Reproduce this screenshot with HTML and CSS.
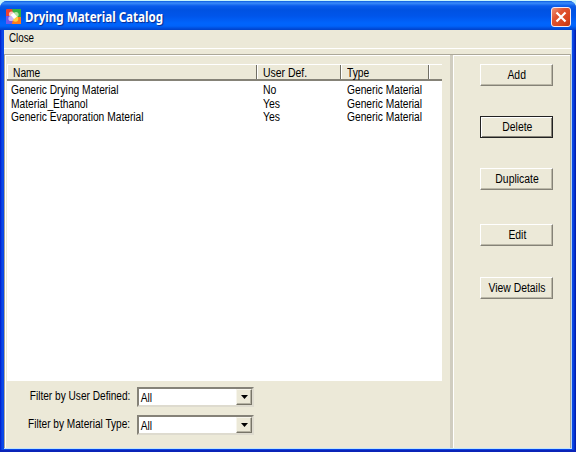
FILE: index.html
```html
<!DOCTYPE html>
<html lang="en">
<head>
<meta charset="utf-8">
<title>Drying Material Catalog</title>
<link rel="stylesheet" href="styles.css">
</head>
<body>
<div class="window">
  <header class="titlebar">
    <svg class="app-icon" width="15" height="15" viewBox="0 0 15 15">
      <rect width="15" height="15" rx="1" fill="#f04030"/>
      <path d="M6 0h9v9H8z" fill="#35b040"/>
      <path d="M0 7h7v8H0z" fill="#6f58ea"/>
      <path d="M7 8h8v7H6z" fill="#ff7a1c"/>
      <circle cx="5.5" cy="5" r="2.6" fill="#f9c5c0"/>
      <circle cx="10" cy="5.5" r="2.6" fill="#b5e4a5"/>
      <circle cx="9.5" cy="10" r="2.8" fill="#ffd040"/>
      <circle cx="5" cy="9.5" r="2.6" fill="#c9b4fa"/>
      <path d="M4.5 6l3-2.2L11 7.6 8 10z" fill="#fff"/>
    </svg>
    <h1 class="title">Drying Material Catalog</h1>
    <button class="close" aria-label="Close window">
      <svg width="12" height="12" viewBox="0 0 12 12"><path d="M1.5 1.5l9 9M10.5 1.5l-9 9" stroke="#fff" stroke-width="2.2"/></svg>
    </button>
  </header>
  <div class="client">
    <nav class="menu"><span class="text close-item">Close</span></nav>
    <main class="content">
      <section class="catalog">
        <div class="list">
          <div class="row head"><div class="cell name"><span class="text">Name</span></div><div class="cell user"><span class="text">User Def.</span></div><div class="cell type"><span class="text">Type</span></div><div class="cell rest"></div></div>
          <div class="row"><div class="cell name"><span class="text">Generic Drying Material</span></div><div class="cell user"><span class="text">No</span></div><div class="cell type"><span class="text">Generic Material</span></div></div>
          <div class="row"><div class="cell name"><span class="text">Material_Ethanol</span></div><div class="cell user"><span class="text">Yes</span></div><div class="cell type"><span class="text">Generic Material</span></div></div>
          <div class="row"><div class="cell name"><span class="text">Generic Evaporation Material</span></div><div class="cell user"><span class="text">Yes</span></div><div class="cell type"><span class="text">Generic Material</span></div></div>
        </div>
        <div class="filters">
          <div class="filter"><label><span class="text">Filter by User Defined:</span></label><div class="combo"><span class="text">All</span><i class="drop"><svg width="7" height="4" viewBox="0 0 7 4"><path d="M0 0h7L3.5 4z"/></svg></i></div></div>
          <div class="filter"><label><span class="text">Filter by Material Type:</span></label><div class="combo"><span class="text">All</span><i class="drop"><svg width="7" height="4" viewBox="0 0 7 4"><path d="M0 0h7L3.5 4z"/></svg></i></div></div>
        </div>
      </section>
      <aside class="actions">
        <button class="btn"><span class="text">Add</span></button>
        <button class="btn default"><span class="text">Delete</span></button>
        <button class="btn"><span class="text">Duplicate</span></button>
        <button class="btn edit"><span class="text">Edit</span></button>
        <button class="btn details"><span class="text">View Details</span></button>
      </aside>
    </main>
  </div>
</div>
</body>
</html>
```
FILE: styles.css
```css
* { box-sizing: border-box; }
body { margin: 0; background: #c9f4fb; font: 12px/13px "Liberation Sans", Arial, sans-serif; color: #000; overflow: hidden; }
button { font: inherit; color: inherit; padding: 0; margin: 0; }
/* Condensed lettering of the dialog font */
.text { display: inline-block; transform: scaleX(.853); transform-origin: left; white-space: nowrap; }
.window { width: 576px; height: 451px; margin-top: 1px; display: flex; flex-direction: column; background: linear-gradient(90deg, #0019c8 0, #0a48e8 2px, #0a48e8 573px, #0018a8 576px); border-bottom: 2px solid #0a24b8; border-radius: 7px 7px 0 0; overflow: hidden; }
.titlebar { height: 29px; flex: none; display: flex; align-items: center; padding: 0 5px 0 6px; background: linear-gradient(#0a5be0 0, #3a8cfa 2px, #0a5ceb 5px, #0052e2 9px, #0055ea 15px, #0064fc 22px, #0063fa 25px, #0048d4 28px, #0042c8 29px); }
.app-icon { flex: none; margin-top: 1px; }
.title { margin: 2px auto 0 4px; font: bold 13.5px/18px "Noto Sans", "Open Sans", sans-serif; color: #fff; text-shadow: 1px 1px 1px #062a90; white-space: nowrap; transform: scaleX(.86); transform-origin: left; }
.close { width: 20px; height: 20px; margin-top: 3px; border: 1px solid #f6e9f0; border-radius: 3px; background: linear-gradient(135deg, #ee9478, #e05532 35%, #d8431c 75%, #bb3411); display: flex; align-items: center; justify-content: center; }
.client { flex: 1; margin: 0 4px 1px; border-right: 1px solid #b8d4f0; border-bottom: 1px solid #c0e4fa; background: #ece9d8; display: flex; flex-direction: column; min-height: 0; }
.menu { height: 19px; flex: none; padding: 2px 5px; border-bottom: 1px solid #fff; }
.close-item { transform: scaleX(.815); }
.content { flex: 1; min-height: 0; margin-top: 5px; display: flex; border-top: 1px solid #aca899; }
.catalog { width: 449px; flex: none; padding: 9px 0 0 2px; box-shadow: inset 1px 1px #fff; border-left: 1px solid #aca899; border-right: 3px solid #d0cdc0; }
.list { width: 435px; height: 317px; background: #fff; }
.row { display: flex; height: 13.5px; line-height: 14px; white-space: nowrap; }
.cell { flex: none; padding-left: 4px; }
.name { width: 250px; }
.user { width: 84px; padding-left: 6px; }
.user .text { transform: scaleX(.87); }
.type { width: 88px; padding-left: 6px; }
.head { height: 17px; margin-bottom: 2px; background: #ece9d8; line-height: 16px; border-top: 1px solid #fff; border-bottom: 2px solid #858277; }
.head .cell { height: 14px; padding-left: 6px; border-right: 1px solid #716f64; box-shadow: inset 1px 0 #fff; }
.head .rest { flex: 1; border: 0; }
.filters { padding-top: 6px; }
.filter { display: flex; height: 28px; }
.filter label { width: 123px; line-height: 18px; text-align: right; white-space: nowrap; }
.filter label .text { transform: scaleX(.843); transform-origin: right; }
.combo { width: 117px; height: 20px; margin-left: 7px; background: #fff; border: 2px solid; border-color: #858278 #dedbcf #dedbcf #858278; display: flex; justify-content: space-between; }
.combo .text { line-height: 18px; padding-left: 2px; }
.drop { width: 16px; height: 16px; background: #ece9d8; border: 1px solid; border-color: #f7f5ec #777468 #777468 #f7f5ec; box-shadow: inset -1px -1px #b5b2a3; display: flex; justify-content: center; align-items: center; }
.actions { flex: 1; padding: 9px 0 0 27px; border-right: 1px solid #aca899; box-shadow: inset 1px 1px #fff; }
.btn { display: block; width: 73px; height: 22px; margin-bottom: 30px; padding-left: 1px; background: #ece9d8; border: 1px solid; border-color: #fff #858277 #858277 #fff; box-shadow: inset -1px -1px #bbb8a8; white-space: nowrap; }
.btn .text { transform: scaleX(.866); transform-origin: center; }
.default { border-color: #222; box-shadow: inset 1px 1px #fff, inset -1px -1px #858277; }
.edit { margin-top: 34px; }
.details { margin-top: 31px; }
```
